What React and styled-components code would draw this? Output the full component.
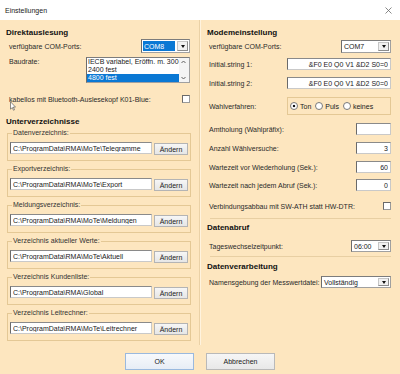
import React from "react";
import styled, { createGlobalStyle } from "styled-components";

const GlobalStyle = createGlobalStyle`
  html, body { margin: 0; padding: 0; background: #fff; }
  body { font-family: "Liberation Sans", Arial, sans-serif; }
  * { box-sizing: border-box; }
`;

const Window = styled.div`
  position: relative;
  width: 400px;
  height: 374px;
  display: flex;
  flex-direction: column;
  background: #fde6bf;
  overflow: hidden;
`;

const TitleBar = styled.div`
  height: 20px;
  flex: none;
  display: flex;
  align-items: center;
  padding: 0 8px 0 5px;
  background: #fff;
`;

const Title = styled.span`
  font-size: 7px;
  color: #1a1a1a;
`;

const CloseIcon = styled.svg`
  margin-left: auto;
  width: 7px;
  height: 7px;
  stroke: #6a6a6a;
  stroke-width: 0.8;
`;

const Main = styled.div`
  display: flex;
  height: 327px;
  flex: none;
`;

const Panel = styled.div`
  display: flex;
  flex-direction: column;
  width: ${(p) => p.$w}px;
  padding-top: 5px;
`;

const Divider = styled.div`
  width: 2px;
  height: 325px;
  border-left: 1px solid #ead1a6;
  border-right: 1px solid #fff3de;
`;

const SectionTitle = styled.div`
  height: 14px;
  display: flex;
  align-items: center;
  margin-top: ${(p) => p.$mt || 0}px;
  padding-left: 6px;
  font-size: 8px;
  font-weight: bold;
  color: #111;
`;

const Row = styled.div`
  display: flex;
  align-items: ${(p) => (p.$top ? "flex-start" : "center")};
  justify-content: space-between;
  height: ${(p) => p.$h || 14}px;
  margin-top: ${(p) => p.$mt || 0}px;
  padding: 0 9px 0 ${(p) => p.$pl || 9}px;
`;

const Label = styled.span`
  font-size: 7px;
  color: #2a2a2a;
  white-space: nowrap;
  padding-top: ${(p) => p.$pt || 0}px;
`;

const Field = styled.input`
  width: ${(p) => p.$w}px;
  height: 12px;
  margin: 0;
  padding: 0 2px;
  font-family: inherit;
  font-size: 7px;
  color: #1a1a1a;
  text-align: ${(p) => (p.$right ? "right" : "left")};
  background: #fff;
  border: 1px solid #c9c9c9;
  border-top-color: #8a8a8a;
  border-left-color: #6a6a6a;
  outline: none;
`;

const Combo = styled.div`
  width: ${(p) => p.$w}px;
  height: ${(p) => p.$h || 12}px;
  display: flex;
  align-items: stretch;
  background: #fff;
  border: 1px solid #a0a0a0;
  border-top-color: #7c7c7c;
  border-left-color: #6c6c6c;
`;

const ComboValue = styled.span`
  flex: 1;
  display: flex;
  align-items: center;
  margin: 1px;
  padding-left: 1px;
  font-size: 7px;
  color: ${(p) => (p.$selected ? "#fff" : "#1a1a1a")};
  background: ${(p) => (p.$selected ? "#0a78d4" : "transparent")};
`;

const DropButton = styled.span`
  width: 11px;
  margin: 1px;
  display: flex;
  align-items: center;
  justify-content: center;
  background: #f0f0f0;
  border: 1px solid #c6c6c6;
  border-right-color: #8c8c8c;
  border-bottom-color: #8c8c8c;
  &::after {
    content: "";
    border-left: 2.5px solid transparent;
    border-right: 2.5px solid transparent;
    border-top: 3px solid #111;
  }
`;

const ListBox = styled.div`
  width: 104px;
  height: 26px;
  display: flex;
  background: #fff;
  border: 1px solid #a0a0a0;
  border-top-color: #7c7c7c;
  border-left-color: #6c6c6c;
`;

const ListItems = styled.div`
  flex: 1;
  display: flex;
  flex-direction: column;
`;

const ListItem = styled.div`
  height: 8px;
  line-height: 8px;
  padding-left: 1px;
  font-size: 7px;
  white-space: nowrap;
  color: ${(p) => (p.$selected ? "#fff" : "#1a1a1a")};
  background: ${(p) => (p.$selected ? "#0a78d4" : "transparent")};
`;

const ScrollBar = styled.div`
  width: 12px;
  display: flex;
  flex-direction: column;
  justify-content: space-between;
  align-items: center;
  padding: 2px 0;
  background: #f4f4f4;
  color: #555;
`;

const Chevron = styled.svg`
  width: 5px;
  height: 4px;
  fill: none;
  stroke: #606060;
  stroke-width: 1;
`;

const CheckBox = styled.span`
  width: 8px;
  height: 8px;
  background: #fff;
  border: 1px solid #9a9a9a;
  border-top-color: #6a6a6a;
  border-left-color: #6a6a6a;
`;

const Group = styled.fieldset`
  display: flex;
  gap: 2px;
  width: 184px;
  margin: ${(p) => (p.$first ? 1 : 4)}px 0 0 7px;
  padding: 5px 2px 5px 2px;
  border: 1px solid #e4c895;
  min-width: 0;
`;

const Legend = styled.legend`
  font-size: 7px;
  line-height: 8px;
  color: #333;
  padding: 0 1px;
  margin-left: 2px;
`;

const SmallButton = styled.button`
  width: 34px;
  height: 12px;
  margin-top: 1px;
  padding: 0;
  font-family: inherit;
  font-size: 7px;
  color: #1a1a1a;
  background: linear-gradient(#f6f6f6, #e6e6e6);
  border: 1px solid #b4b4b4;
`;

const RadioGroup = styled.div`
  width: 104px;
  height: 18px;
  display: flex;
  align-items: center;
  padding-left: 2px;
  border: 1px solid #e4c895;
  gap: 3px;
`;

const Radio = styled.span`
  display: flex;
  align-items: center;
  gap: 2px;
  font-size: 7px;
  color: #1a1a1a;
  margin-right: 1px;
  &::before {
    content: "";
    width: 6px;
    height: 6px;
    border-radius: 50%;
    border: 1px solid #7a7a7a;
    background: ${(p) =>
      p.$checked
        ? "radial-gradient(circle, #111 0 1.3px, #fff 1.6px)"
        : "#fff"};
  }
`;

const Separator = styled.div`
  height: 1px;
  margin: ${(p) => p.$mt}px 9px 0 9px;
  background: #e8cfa3;
`;

const Footer = styled.div`
  display: flex;
  justify-content: center;
  gap: 12px;
  padding-top: 6px;
`;

const DialogButton = styled.button`
  width: 69px;
  height: 17px;
  padding: 0;
  font-family: inherit;
  font-size: 7px;
  color: #1a1a1a;
  background: ${(p) =>
    p.$default
      ? "linear-gradient(#f7f9fc, #e7edf5)"
      : "linear-gradient(#f6f6f6, #e8e8e8)"};
  border: 1px solid ${(p) => (p.$default ? "#9ab9de" : "#b9b9b9")};
`;

const Cursor = styled.svg`
  position: absolute;
  left: 10px;
  top: 101px;
  width: 6px;
  height: 10px;
`;

const dirs = [
  ["Datenverzeichnis:", "C:\\ProgramData\\RMA\\MoTe\\Telegramme"],
  ["Exportverzeichnis:", "C:\\ProgramData\\RMA\\MoTe\\Export"],
  ["Meldungsverzeichnis:", "C:\\ProgramData\\RMA\\MoTe\\Meldungen"],
  ["Verzeichnis aktueller Werte:", "C:\\ProgramData\\RMA\\MoTe\\Aktuell"],
  ["Verzeichnis Kundenliste:", "C:\\ProgramData\\RMA\\Global"],
  ["Verzeichnis Leitrechner:", "C:\\ProgramData\\RMA\\MoTe\\Leitrechner"],
];

const initString = "&F0 E0 Q0 V1 &D2 S0=0";

export default function App() {
  return (
    <>
      <GlobalStyle />
      <Window>
        <TitleBar>
          <Title>Einstellungen</Title>
          <CloseIcon viewBox="0 0 7 7">
            <path d="M0.5 0.5 L6.5 6.5 M6.5 0.5 L0.5 6.5" />
          </CloseIcon>
        </TitleBar>

        <Main>
          <Panel $w={199}>
            <SectionTitle>Direktauslesung</SectionTitle>
            <Row>
              <Label>verfügbare COM-Ports:</Label>
              <Combo $w={49} $h={14}>
                <ComboValue $selected>COM8</ComboValue>
                <DropButton />
              </Combo>
            </Row>
            <Row $top $h={26} $mt={4}>
              <Label $pt={1}>Baudrate:</Label>
              <ListBox>
                <ListItems>
                  <ListItem>IECB variabel, Eröffn. m. 300</ListItem>
                  <ListItem>2400 fest</ListItem>
                  <ListItem $selected>4800 fest</ListItem>
                </ListItems>
                <ScrollBar>
                  <Chevron viewBox="0 0 5 4">
                    <path d="M0.5 3 L2.5 1 L4.5 3" />
                  </Chevron>
                  <Chevron viewBox="0 0 5 4">
                    <path d="M0.5 1 L2.5 3 L4.5 1" />
                  </Chevron>
                </ScrollBar>
              </ListBox>
            </Row>
            <Row $mt={9}>
              <Label>kabellos mit Bluetooth-Auslesekopf K01-Blue:</Label>
              <CheckBox />
            </Row>

            <SectionTitle $mt={8}>Unterverzeichnisse</SectionTitle>
            {dirs.map(([title, path], i) => (
              <Group key={title} $first={i === 0}>
                <Legend>{title}</Legend>
                <Field $w={142} value={path} readOnly />
                <SmallButton>Ändern</SmallButton>
              </Group>
            ))}
          </Panel>

          <Divider />

          <Panel $w={199}>
            <SectionTitle>Modemeinstellung</SectionTitle>
            <Row $pl={8}>
              <Label>verfügbare COM-Ports:</Label>
              <Combo $w={50} $h={13}>
                <ComboValue>COM7</ComboValue>
                <DropButton />
              </Combo>
            </Row>
            <Row $pl={8} $mt={4}>
              <Label>Initial.string 1:</Label>
              <Field $w={104} $right value={initString} readOnly />
            </Row>
            <Row $pl={8} $mt={5}>
              <Label>Initial.string 2:</Label>
              <Field $w={104} $right value={initString} readOnly />
            </Row>
            <Row $pl={8} $h={18} $mt={7}>
              <Label>Wahlverfahren:</Label>
              <RadioGroup>
                <Radio $checked>Ton</Radio>
                <Radio>Puls</Radio>
                <Radio>keines</Radio>
              </RadioGroup>
            </Row>
            <Row $pl={8} $mt={7}>
              <Label>Amtholung (Wahlpräfix):</Label>
              <Field $w={35} $right value="" readOnly />
            </Row>
            <Row $pl={8} $mt={5}>
              <Label>Anzahl Wählversuche:</Label>
              <Field $w={35} $right value="3" readOnly />
            </Row>
            <Row $pl={8} $mt={5}>
              <Label>Wartezeit vor Wiederholung (Sek.):</Label>
              <Field $w={35} $right value="60" readOnly />
            </Row>
            <Row $pl={8} $mt={4}>
              <Label>Wartezeit nach jedem Abruf (Sek.):</Label>
              <Field $w={35} $right value="0" readOnly />
            </Row>
            <Row $pl={8} $mt={7}>
              <Label>Verbindungsabbau mit SW-ATH statt HW-DTR:</Label>
              <CheckBox />
            </Row>

            <Separator $mt={5} />
            <SectionTitle $mt={1}>Datenabruf</SectionTitle>
            <Row $pl={8} $mt={5}>
              <Label>Tageswechselzeitpunkt:</Label>
              <Combo $w={40}>
                <ComboValue>06:00</ComboValue>
                <DropButton />
              </Combo>
            </Row>

            <Separator $mt={3} />
            <SectionTitle $mt={2}>Datenverarbeitung</SectionTitle>
            <Row $pl={8} $mt={2}>
              <Label>Namensgebung der Messwertdatei:</Label>
              <Combo $w={70}>
                <ComboValue>Vollständig</ComboValue>
                <DropButton />
              </Combo>
            </Row>
          </Panel>
        </Main>

        <Footer>
          <DialogButton $default>OK</DialogButton>
          <DialogButton>Abbrechen</DialogButton>
        </Footer>

        <Cursor viewBox="0 0 12 19">
          <path
            d="M1 1 L1 16 L4.5 12.5 L7 18 L9 17 L6.7 11.7 L11 11.7 Z"
            fill="#fff"
            stroke="#444"
            strokeWidth="1.2"
          />
        </Cursor>
      </Window>
    </>
  );
}
